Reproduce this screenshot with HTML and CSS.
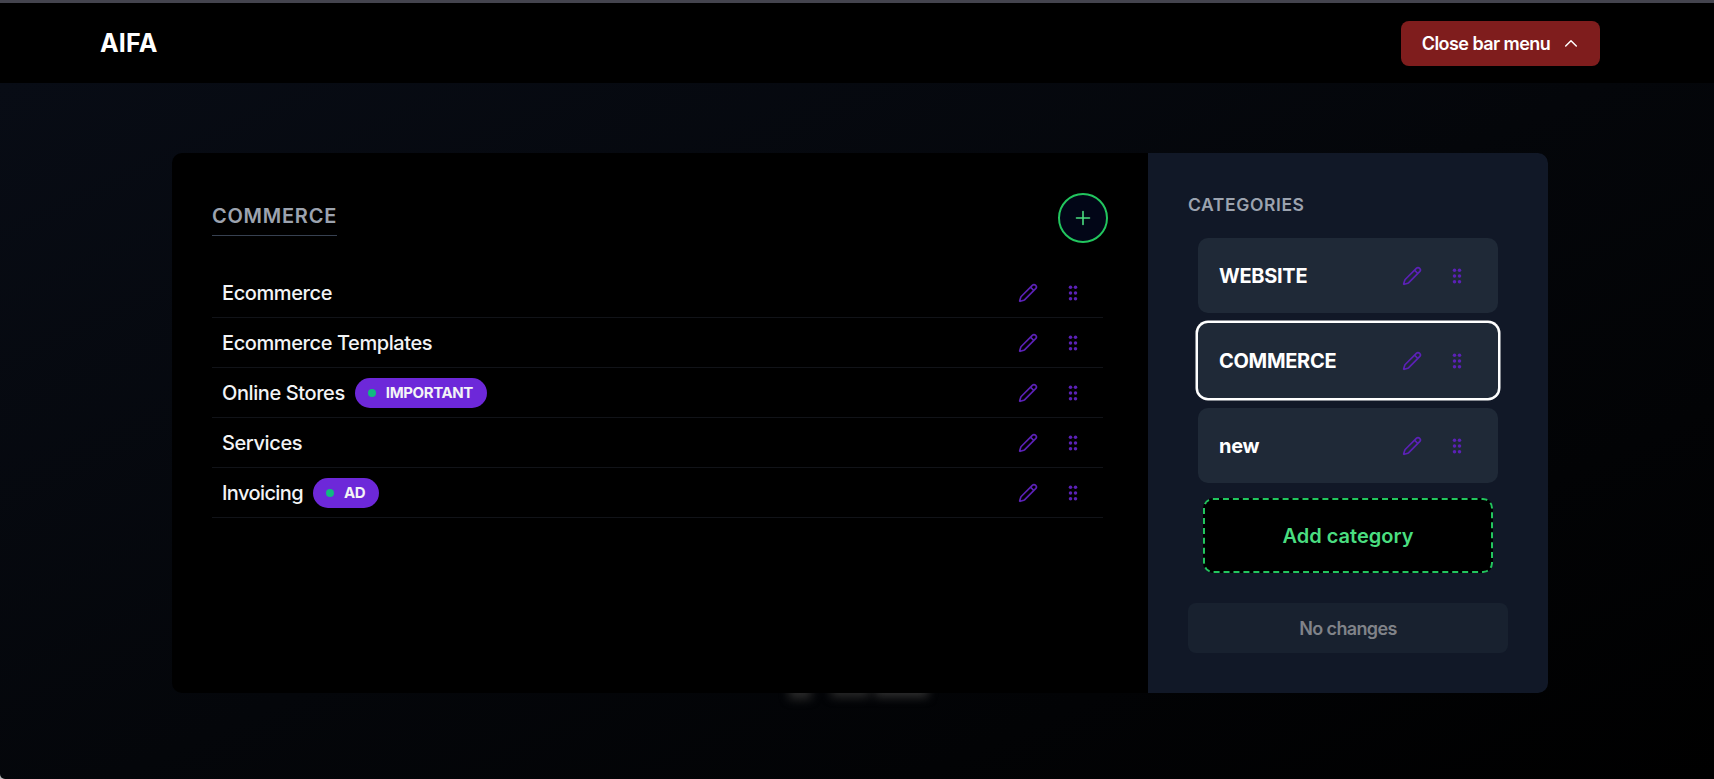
FILE: index.html
```html
<!DOCTYPE html>
<html lang="en">
<head>
<meta charset="utf-8">
<title>AIFA</title>
<link rel="stylesheet" href="styles.css">
</head>
<body>
<svg class="defs" aria-hidden="true">
  <symbol id="pencil" viewBox="0 0 24 24"><path d="M21.174 6.812a1 1 0 0 0-3.986-3.987L3.842 16.174a2 2 0 0 0-.5.83l-1.321 4.352a.5.5 0 0 0 .623.622l4.353-1.32a2 2 0 0 0 .83-.497zM15 5l4 4" fill="none" stroke="currentColor" stroke-width="2" stroke-linecap="round" stroke-linejoin="round"/></symbol>
  <symbol id="grip" viewBox="0 0 20 20"><g fill="currentColor"><circle cx="7.5" cy="4.2" r="1.75"/><circle cx="12.5" cy="4.2" r="1.75"/><circle cx="7.5" cy="10" r="1.75"/><circle cx="12.5" cy="10" r="1.75"/><circle cx="7.5" cy="15.8" r="1.75"/><circle cx="12.5" cy="15.8" r="1.75"/></g></symbol>
</svg>
<header class="topbar">
  <div class="brand">AIFA</div>
  <button class="close"><span class="t-close">Close bar menu</span>
    <svg width="14" height="14" viewBox="0 0 14 14"><path d="M1.7 9 7 3.8 12.3 9" fill="none" stroke="currentColor" stroke-width="1.5" stroke-linecap="round" stroke-linejoin="round"/></svg>
  </button>
</header>
<main class="stage">
  <div class="glow"><i></i><i></i><i></i></div>
  <div class="panel">
    <section class="content">
      <div class="head">
        <h2 class="title">COMMERCE</h2>
        <button class="add"><svg width="20" height="20" viewBox="0 0 20 20"><path d="M10 3.5v13M3.5 10h13" stroke="currentColor" stroke-width="1.6" stroke-linecap="round"/></svg></button>
      </div>
      <ul class="list">
        <li><span class="label">Ecommerce</span><span class="tools"><svg><use href="#pencil"/></svg><svg><use href="#grip"/></svg></span></li>
        <li><span class="label">Ecommerce Templates</span><span class="tools"><svg><use href="#pencil"/></svg><svg><use href="#grip"/></svg></span></li>
        <li><span class="label">Online Stores</span><span class="badge wide"><b></b><span>IMPORTANT</span></span><span class="tools"><svg><use href="#pencil"/></svg><svg><use href="#grip"/></svg></span></li>
        <li><span class="label">Services</span><span class="tools"><svg><use href="#pencil"/></svg><svg><use href="#grip"/></svg></span></li>
        <li><span class="label tight">Invoicing</span><span class="badge small"><b></b><span>AD</span></span><span class="tools"><svg><use href="#pencil"/></svg><svg><use href="#grip"/></svg></span></li>
      </ul>
    </section>
    <aside class="side">
      <h3 class="side-title">CATEGORIES</h3>
      <div class="cards">
        <div class="card"><span>WEBSITE</span><span class="tools"><svg><use href="#pencil"/></svg><svg><use href="#grip"/></svg></span></div>
        <div class="card active"><span>COMMERCE</span><span class="tools"><svg><use href="#pencil"/></svg><svg><use href="#grip"/></svg></span></div>
        <div class="card"><span>new</span><span class="tools"><svg><use href="#pencil"/></svg><svg><use href="#grip"/></svg></span></div>
      </div>
      <button class="add-cat">Add category</button>
      <button class="save" disabled>No changes</button>
    </aside>
  </div>
</main>
</body>
</html>
```
FILE: styles.css
```css
* { box-sizing: border-box; }
html { background: #b8b8b8; }
body {
  margin: 0; height: 779px; overflow: hidden; display: flex; flex-direction: column;
  font-family: Inter, "Liberation Sans", sans-serif; font-size: 20px; color: #f3f4f6;
}
button, h2, h3, ul { font: inherit; margin: 0; padding: 0; }
button { border: 0; display: flex; align-items: center; justify-content: center; }
span { white-space: nowrap; }
.defs { position: absolute; width: 0; height: 0; }
.topbar {
  height: 83px; flex: none; background: #000; border-top: 3px solid #44444e;
  display: flex; align-items: center; justify-content: space-between; padding: 0 114px 0 100px;
}
.brand { font-size: 25px; font-weight: 700; color: #fff; letter-spacing: .2px; line-height: 30px; }
.close {
  width: 199px; height: 45px; margin-top: 1px; border-radius: 8px; background: #7f1d1d; color: #fff;
  font-size: 18px; font-weight: 600; justify-content: flex-start; padding-left: 20px; gap: 13px;
}
.t-close { letter-spacing: -.55px; width: 130px; }
.stage {
  flex: 1; position: relative; padding: 70px 166px 0 172px; border-bottom-left-radius: 5px;
  background: linear-gradient(155deg, #080c15 0%, #04060a 50%, #000 100%);
}
.glow { position: absolute; left: 789px; top: 596px; display: flex; gap: 20px; filter: blur(5px); }
.glow i { width: 22px; height: 20px; background: #2a2a2a; }
.glow i + i { width: 38px; height: 18px; }
.glow i + i + i { width: 53px; margin-left: -14px; background: #303030; }
.panel {
  position: relative; display: flex; height: 540px; border-radius: 10px; overflow: hidden; background: #000;
}
.content { flex: 1; padding: 40px 40px 0; }
.head { display: flex; justify-content: space-between; height: 50px; align-items: flex-start; }
.title {
  margin-top: 6px; width: 125px; height: 37px; line-height: 34px; border-bottom: 1px solid #374151; color: #9ca3af;
  font-size: 20px; font-weight: 600; letter-spacing: .75px; white-space: nowrap;
}
.add { width: 50px; height: 50px; border-radius: 50%; border: 2px solid #22c55e; background: #020617; color: #4ade80; }
.list { list-style: none; margin-top: 25px; width: 891px; }
.list li { height: 50px; display: flex; align-items: center; border-bottom: 1px solid #111318; padding: 0 20px 0 10px; }
.label { font-weight: 450; letter-spacing: -.4px; }
.tight { letter-spacing: -.6px; }
.tools { margin-left: auto; display: flex; gap: 25px; color: #5b21b6; }
.tools svg { width: 20px; height: 20px; display: block; }
.badge {
  height: 30px; border-radius: 15px; background: #6d28d9; display: flex; align-items: center;
  margin-left: 10px; padding-left: 13px; gap: 10px; font-size: 15px; font-weight: 700; letter-spacing: -.4px;
}
.badge b { width: 8px; height: 8px; border-radius: 50%; background: #10b981; }
.wide { width: 132px; }
.small { width: 66px; }
.side { width: 400px; background: #111827; padding: 40px; }
.side-title { font-size: 17.5px; font-weight: 600; line-height: 24px; color: #9ca3af; letter-spacing: .6px; }
.cards { display: flex; flex-direction: column; gap: 10px; padding: 0 10px; margin-top: 21px; }
.card { height: 75px; border-radius: 10px; background: #1f2937; display: flex; align-items: center; padding: 0 31px 0 21px; font-weight: 700; color: #fff; letter-spacing: -.3px; }
.active { box-shadow: 0 0 0 2.5px #fff; }
.add-cat { width: 290px; height: 75px; margin: 15px 15px 0; border: 2px dashed #22c55e; border-radius: 10px; background: #000; color: #4ade80; font-weight: 600; }
.save { width: 320px; height: 50px; margin-top: 30px; border-radius: 8px; background: #18212f; color: #808389; font-size: 18px; font-weight: 600; letter-spacing: -.65px; }
```
